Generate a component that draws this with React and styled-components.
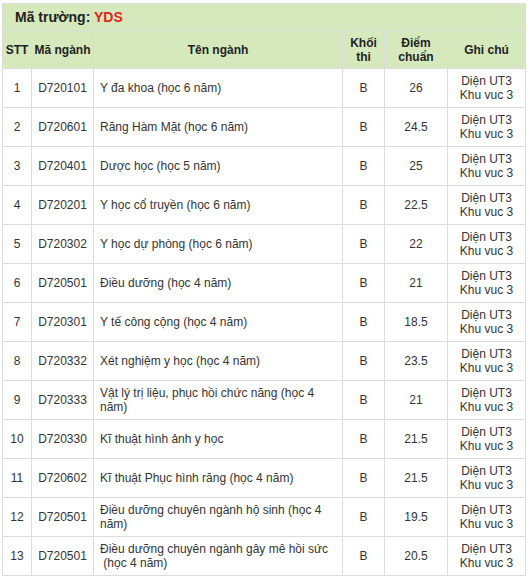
import React from "react";
import styled, { createGlobalStyle } from "styled-components";

const Global = createGlobalStyle`
  html, body { margin: 0; padding: 0; background: #fff; }
  body { font-family: "Liberation Sans", Arial, sans-serif; color: #333; }
`;

const Wrap = styled.div`
  padding: 3px 4px 0 2px;
`;

const Table = styled.table`
  border-collapse: collapse;
  table-layout: fixed;
  width: 523px;
  font-size: 12px;
  line-height: 14px;
`;

const TitleCell = styled.td`
  background: #d6e9bc;
  border: 1px solid #dcdcdc;
  height: 26px;
  padding: 0 0 0 12px;
  font-size: 14px;
  font-weight: bold;
  color: #222;
  text-align: left;
  vertical-align: middle;
`;

const Red = styled.span`
  color: #e0261c;
`;

const Th = styled.th`
  background: #d6e9bc;
  border: 1px solid #dcdcdc;
  height: 37px;
  padding: 0 2px;
  font-weight: bold;
  color: #222;
  text-align: center;
  vertical-align: middle;
`;

const Td = styled.td`
  border: 1px solid #dcdcdc;
  height: 38px;
  padding: 0 ${(p) => (p.$left ? "6px" : "2px")};
  text-align: ${(p) => (p.$left ? "left" : "center")};
  vertical-align: middle;
  color: #333;
`;

const rows = [
  ["1", "D720101", "Y đa khoa (học 6 năm)", "26"],
  ["2", "D720601", "Răng Hàm Mặt (học 6 năm)", "24.5"],
  ["3", "D720401", "Dược học (học 5 năm)", "25"],
  ["4", "D720201", "Y học cổ truyền (học 6 năm)", "22.5"],
  ["5", "D720302", "Y học dự phòng (học 6 năm)", "22"],
  ["6", "D720501", "Điều dưỡng (học 4 năm)", "21"],
  ["7", "D720301", "Y tế công cộng (học 4 năm)", "18.5"],
  ["8", "D720332", "Xét nghiệm y học (học 4 năm)", "23.5"],
  ["9", "D720333", "Vật lý trị liệu, phục hồi chức năng (học 4 năm)", "21"],
  ["10", "D720330", "Kĩ thuật hình ảnh y học", "21.5"],
  ["11", "D720602", "Kĩ thuật Phục hình răng (học 4 năm)", "21.5"],
  ["12", "D720501", "Điều dưỡng chuyên ngành hộ sinh (học 4 năm)", "19.5"],
  ["13", "D720501", "Điều dưỡng chuyên ngành gây mê hồi sức \u00a0(học 4 năm)", "20.5"],
];

export default function App() {
  return (
    <Wrap>
      <Global />
      <Table>
        <colgroup>
          <col style={{ width: 29 }} />
          <col style={{ width: 62 }} />
          <col style={{ width: 249 }} />
          <col style={{ width: 42 }} />
          <col style={{ width: 63 }} />
          <col style={{ width: 78 }} />
        </colgroup>
        <tbody>
          <tr>
            <TitleCell colSpan={6}>
              Mã trường: <Red>YDS</Red>
            </TitleCell>
          </tr>
          <tr>
            <Th>STT</Th>
            <Th>Mã ngành</Th>
            <Th>Tên ngành</Th>
            <Th>
              Khối
              <br />
              thi
            </Th>
            <Th>
              Điểm
              <br />
              chuẩn
            </Th>
            <Th>Ghi chú</Th>
          </tr>
          {rows.map((r) => (
            <tr key={r[0]}>
              <Td>{r[0]}</Td>
              <Td>{r[1]}</Td>
              <Td $left>{r[2]}</Td>
              <Td>B</Td>
              <Td>{r[3]}</Td>
              <Td>
                Diện UT3
                <br />
                Khu vuc 3
              </Td>
            </tr>
          ))}
        </tbody>
      </Table>
    </Wrap>
  );
}
